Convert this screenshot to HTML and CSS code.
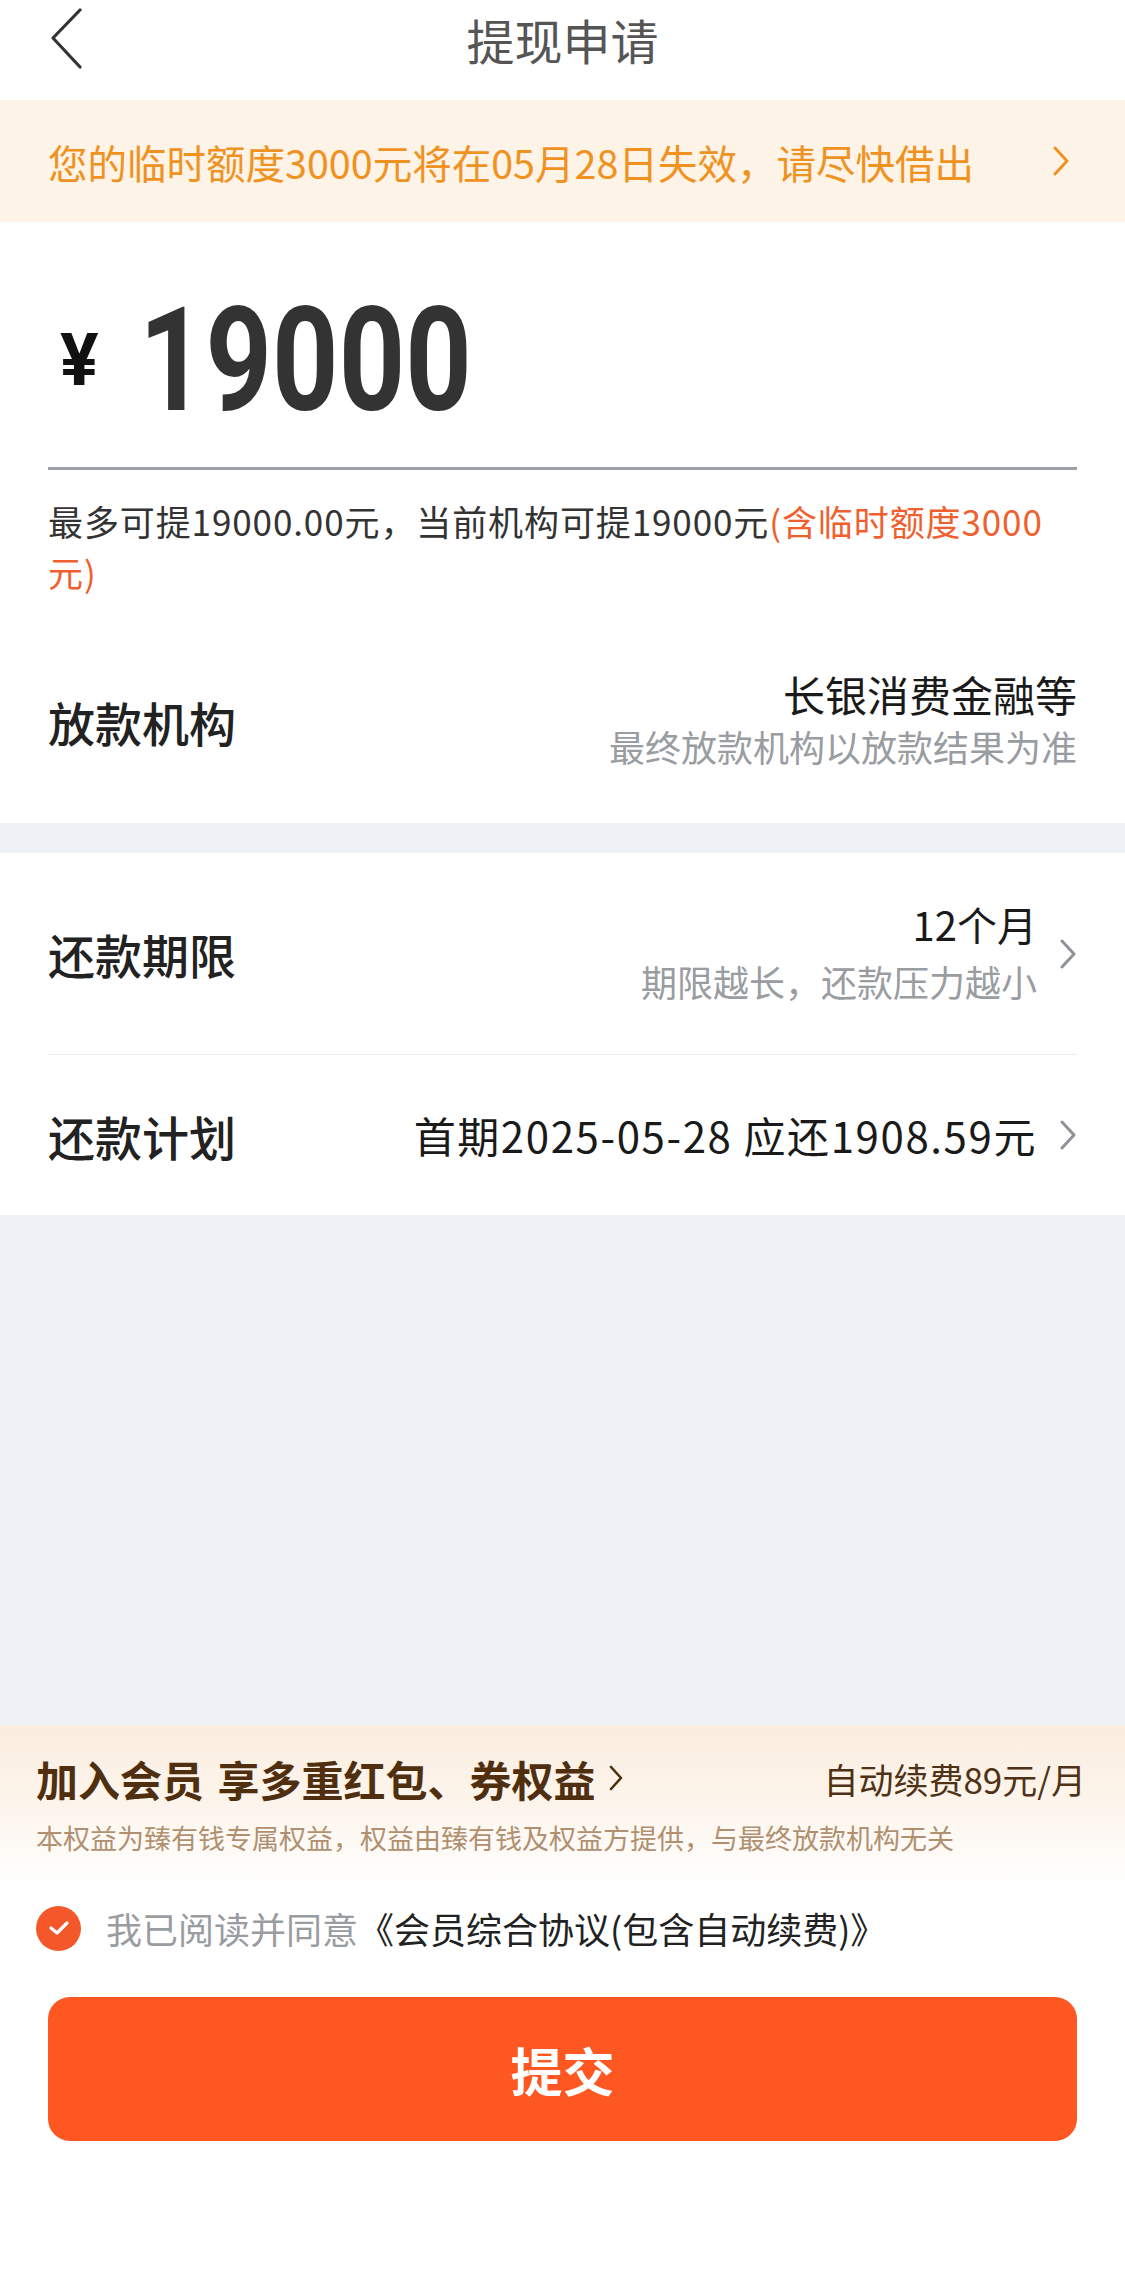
FILE: index.html
```html
<!DOCTYPE html>
<html lang="zh-CN">
<head>
<meta charset="utf-8">
<title>提现申请</title>
<link rel="stylesheet" href="styles.css">
</head>
<body>
<div class="app">
  <header class="nav">
    <svg class="nav-back" width="34" height="62" viewBox="0 0 34 62"><path d="M30 2 L3 30 L30 59" fill="none" stroke="#333" stroke-width="3.2" stroke-linecap="round" stroke-linejoin="round"/></svg>
    <h1 class="nav-title">提现申请</h1>
  </header>

  <div class="notice">
    <span class="notice-text">您的临时额度3000元将在05月28日失效，请尽快借出</span>
    <svg class="notice-arrow" width="16" height="30" viewBox="0 0 16 30"><path d="M2 2 L14 15 L2 28" fill="none" stroke="#f0921f" stroke-width="3" stroke-linecap="round" stroke-linejoin="round"/></svg>
  </div>

  <section class="card amount-card">
    <div class="amount-row">
      <span class="yen">¥</span>
      <span class="amount">19000</span>
    </div>
    <p class="hint">最多可提19000.00元，当前机构可提19000元<span class="hint-accent">(含临时额度3000</span><span class="hint-accent">元)</span></p>
    <div class="row row-lender">
      <span class="row-label">放款机构</span>
      <div class="row-value">
        <span class="value-main">长银消费金融等</span>
        <span class="value-sub">最终放款机构以放款结果为准</span>
      </div>
    </div>
  </section>

  <section class="card list-card">
    <div class="row row-term">
      <span class="row-label">还款期限</span>
      <div class="row-right">
        <div class="row-value">
          <span class="value-main">12个月</span>
          <span class="value-sub">期限越长，还款压力越小</span>
        </div>
        <svg class="chev" width="18" height="30" viewBox="0 0 18 30"><path d="M3 2 L15 15 L3 28" fill="none" stroke="#8e9399" stroke-width="3" stroke-linecap="round" stroke-linejoin="round"/></svg>
      </div>
    </div>
    <div class="row row-plan">
      <span class="row-label">还款计划</span>
      <div class="row-right">
        <span class="value-main">首期2025-05-28 应还1908.59元</span>
        <svg class="chev" width="18" height="30" viewBox="0 0 18 30"><path d="M3 2 L15 15 L3 28" fill="none" stroke="#8e9399" stroke-width="3" stroke-linecap="round" stroke-linejoin="round"/></svg>
      </div>
    </div>
  </section>

  <div class="filler"></div>

  <footer class="bottom">
    <div class="vip-row">
      <span class="vip-title">加入会员 享多重红包、券权益<svg class="vip-arrow" width="16" height="28" viewBox="0 0 16 28"><path d="M3 3 L13 14 L3 25" fill="none" stroke="#4f2f10" stroke-width="2.6" stroke-linecap="round" stroke-linejoin="round"/></svg></span>
      <span class="vip-fee">自动续费89元/月</span>
    </div>
    <p class="vip-note">本权益为臻有钱专属权益，权益由臻有钱及权益方提供，与最终放款机构无关</p>
    <div class="agree">
      <span class="check"><svg width="22" height="16" viewBox="0 0 22 16"><path d="M3 8 L9 13 L19 3" fill="none" stroke="#fff" stroke-width="3.2" stroke-linecap="round" stroke-linejoin="round"/></svg></span>
      <span class="agree-text">我已阅读并同意<span class="agree-link">《会员综合协议(包含自动续费)》</span></span>
    </div>
    <button class="submit" type="button">提交</button>
  </footer>
</div>
</body>
</html>
```

FILE: styles.css
```css
* {
  box-sizing: border-box;
}

html, body {
  margin: 0;
  padding: 0;
}

body {
  font-family: "Noto Sans CJK SC", "Noto Sans", sans-serif;
  background: #eef1f5;
  color: #222;
}

.app {
  width: 1125px;
  height: 2275px;
  display: flex;
  flex-direction: column;
  overflow: hidden;
}

/* nav */
.nav {
  position: relative;
  height: 100px;
  background: #fff;
  display: flex;
  justify-content: center;
}

.nav-back {
  position: absolute;
  left: 50px;
  top: 8px;
}

.nav-title {
  margin: 0;
  font-size: 48px;
  font-weight: 400;
  line-height: 78px;
  color: #555;
}

/* notice */
.notice {
  height: 122px;
  background: #fdf3e6;
  display: flex;
  align-items: center;
  justify-content: space-between;
  padding: 0 56px 0 48px;
}

.notice-text {
  font-size: 39.5px;
  color: #f0921f;
}

/* cards */
.card {
  background: #fff;
  padding: 0 48px;
}

.amount-card {
  margin-bottom: 30px;
}

.amount-row {
  height: 248px;
  padding-top: 32px;
  display: flex;
  align-items: center;
  border-bottom: 3px solid #9ca0a6;
}

.yen {
  font-family: Roboto, "Liberation Sans", sans-serif;
  font-weight: 700;
  font-size: 72px;
  color: #111;
  margin-left: 12px;
}

.amount {
  font-family: Roboto, "Liberation Sans", sans-serif;
  font-weight: 700;
  font-size: 145px;
  line-height: 1;
  color: #333;
  margin-left: 40px;
  transform: scaleX(0.8);
  transform-origin: left center;
  display: inline-block;
}

.hint {
  margin: 25px 0 0;
  font-size: 35px;
  letter-spacing: 0.9px;
  line-height: 51px;
  color: #333;
}

.hint-accent {
  color: #f0602e;
}

.row {
  display: flex;
  align-items: center;
  justify-content: space-between;
}

.row-label {
  font-size: 47px;
  font-weight: 500;
  color: #222;
}

.row-value {
  display: flex;
  flex-direction: column;
  align-items: flex-end;
}

.value-main {
  font-size: 40px;
  line-height: 52px;
  color: #1a1a1a;
}

.value-sub {
  font-size: 36px;
  line-height: 54px;
  color: #999ca1;
}

.row-lender {
  height: 226px;
  padding-top: 22px;
}

.row-lender .value-main {
  font-size: 42px;
  line-height: 50px;
}

.row-right {
  display: flex;
  align-items: center;
  gap: 22px;
}

.chev {
  display: block;
}

.row-term {
  height: 202px;
  border-bottom: 1px solid #ececec;
}

.row-term .value-main {
  line-height: 54px;
}

.row-term .value-sub {
  line-height: 60px;
}

.row-plan {
  height: 160px;
}

.row-plan .value-main {
  font-size: 42px;
  letter-spacing: 1.6px;
}

.filler {
  flex: 1;
}

/* bottom */
.bottom {
  height: 550px;
  background: linear-gradient(to bottom, #fbeddf 0px, #fdf6ee 90px, #ffffff 160px);
  padding: 23px 39px 0 36px;
}

.vip-row {
  display: flex;
  align-items: center;
  justify-content: space-between;
  height: 60px;
}

.vip-title {
  font-size: 42px;
  font-weight: 700;
  color: #4f2f10;
  display: flex;
  align-items: center;
  word-spacing: 4px;
}

.vip-arrow {
  margin-left: 12px;
}

.vip-fee {
  font-size: 35px;
  color: #4f3215;
}

.vip-note {
  margin: 10px 0 0;
  font-size: 27px;
  line-height: 40px;
  color: #b09070;
}

.agree {
  margin-top: 45px;
  height: 50px;
  display: flex;
  align-items: center;
}

.check {
  width: 45px;
  height: 45px;
  border-radius: 50%;
  background: #f4572a;
  display: flex;
  align-items: center;
  justify-content: center;
  margin-right: 25px;
}

.agree-text {
  font-size: 36px;
  color: #999ca1;
}

.agree-link {
  color: #222;
}

.submit {
  display: block;
  width: calc(100% - 21px);
  margin: 44px 0 0 12px;
  height: 144px;
  border: none;
  border-radius: 22px;
  background: #fe5722;
  color: #fff;
  font-family: "Noto Sans CJK SC", sans-serif;
  font-size: 52px;
  font-weight: 700;
}
```
